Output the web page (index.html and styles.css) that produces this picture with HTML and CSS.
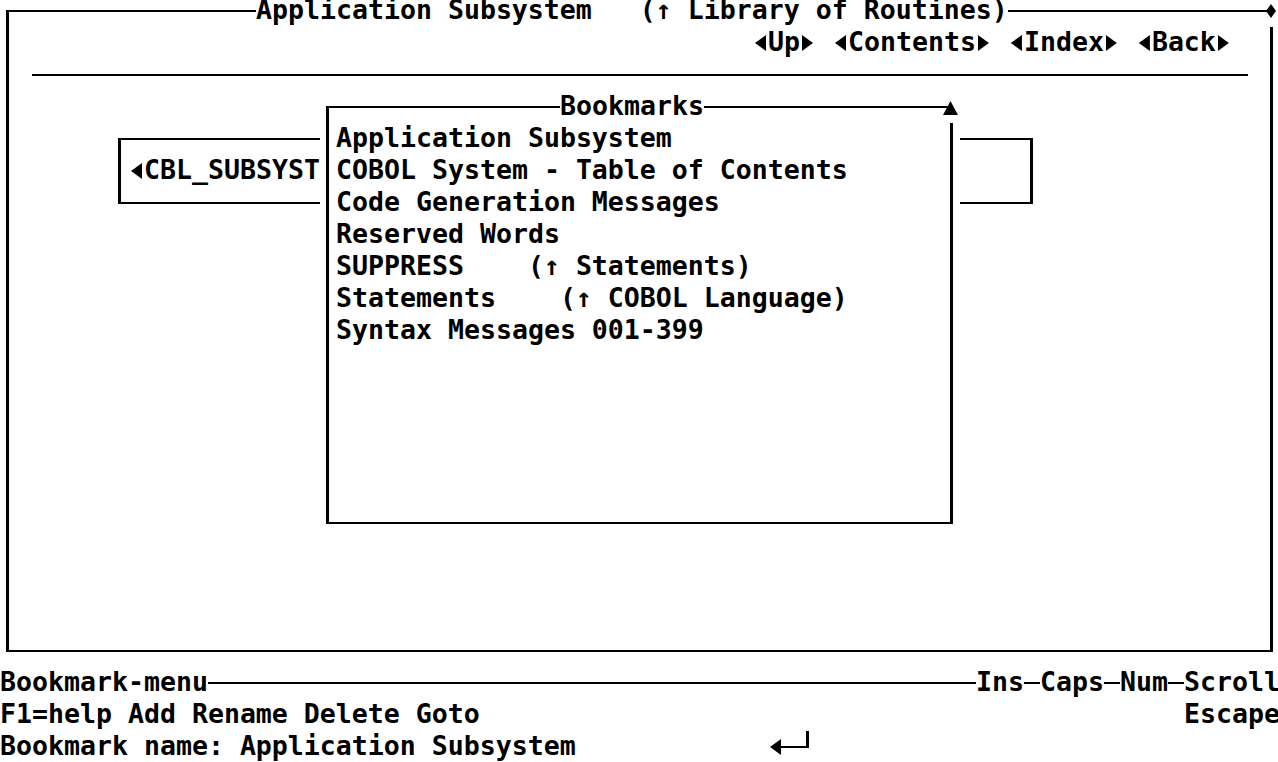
FILE: index.html
```html
<!DOCTYPE html>
<html lang="en">

<head>
    <meta charset="UTF-8">
    <title>Bookmarks</title>
    <link rel="stylesheet" href="styles.css">
</head>

<body>
    <div class="screen">

        <!-- Ventana principal de ayuda -->
        <div class="frame window"></div>
        <div class="window-title txt">Application Subsystem   (↑ Library of Routines)</div>
        <div class="corner-mark"></div>
        <div class="nav-links txt"><span class="arrow-l"></span>Up<span class="arrow-r"></span> <span class="arrow-l"></span>Contents<span class="arrow-r"></span> <span class="arrow-l"></span>Index<span class="arrow-r"></span> <span class="arrow-l"></span>Back<span class="arrow-r"></span></div>
        <div class="separator"></div>

        <!-- Recuadro del hotspot, tapado en parte por el dialogo -->
        <div class="frame hotspot"></div>
        <div class="hotspot-label txt"><span class="arrow-l"></span>CBL_SUBSYST</div>

        <!-- Dialogo de marcadores -->
        <div class="dialog-mask"></div>
        <div class="frame dialog"></div>
        <div class="dialog-title txt">Bookmarks</div>
        <div class="scroll-up"></div>
        <ul class="bookmark-list">
            <li>Application Subsystem</li>
            <li>COBOL System - Table of Contents</li>
            <li>Code Generation Messages</li>
            <li>Reserved Words</li>
            <li>SUPPRESS    (↑ Statements)</li>
            <li>Statements    (↑ COBOL Language)</li>
            <li>Syntax Messages 001-399</li>
        </ul>

        <!-- Lineas de estado -->
        <div class="status-line txt"><span>Bookmark-menu</span><span class="rule"></span><span>Ins<span class="dash"></span>Caps<span class="dash"></span>Num<span class="dash"></span>Scroll</span></div>
        <div class="key-line txt"><span>F1=help Add Rename Delete Goto</span><span>Escape</span></div>
        <div class="prompt-line txt">Bookmark name: Application Subsystem</div>
        <div class="enter-key">
            <svg width="48" height="32" viewBox="0 0 48 32">
                <path d="M2 16 L13 8 V24 Z" />
                <rect x="13" y="15" width="28" height="2" />
                <rect x="38" y="0" width="3" height="17" />
            </svg>
        </div>
    </div>
</body>

</html>
```

FILE: styles.css
```css
/* Pantalla en modo texto: 80 columnas x 24 filas de 16x32 px */
body {
    margin: 0;
    background: #fff;
    color: #000;
    overflow: hidden;
}

.screen {
    display: grid;
    grid-template-columns: repeat(80, 16px);
    grid-template-rows: repeat(24, 32px);
    margin-top: -5px;
    font-family: "DejaVu Sans Mono", monospace;
    font-size: 26.57px;
    font-weight: bold;
    line-height: 30px;
}

.txt {
    white-space: pre;
    background: #fff;
}

/* Marco de caja: lineas en el centro de la celda */
.frame {
    border: 2px solid #000;
    border-left-width: 3px;
    border-right-width: 3px;
    margin: 15px 7px 15px 6px;
}

/* Ventana principal */
.window {
    grid-column: 1 / 81;
    grid-row: 1 / 22;
}

.window-title {
    grid-column: 17 / 64;
    grid-row: 1;
}

.corner-mark {
    grid-column: 80;
    grid-row: 1;
    background:
        linear-gradient(#000, #000) 0 15px / 7px 2px no-repeat,
        #fff;
}

.corner-mark::before {
    content: "";
    display: block;
    width: 10px;
    height: 14px;
    margin: 9px 0 0 2px;
    background: #000;
    clip-path: polygon(50% 0, 100% 50%, 50% 100%, 0 50%);
}

.nav-links {
    grid-column: 48 / 78;
    grid-row: 2;
}

.separator {
    grid-column: 3 / 79;
    grid-row: 3;
    background: linear-gradient(#000, #000) 0 15px / 100% 2px no-repeat;
}

/* Flechas de los enlaces */
.arrow-l,
.arrow-r {
    display: inline-block;
    width: 16px;
    height: 30px;
    vertical-align: top;
}

.arrow-l::before,
.arrow-r::before {
    content: "";
    display: block;
    width: 11px;
    height: 16px;
    margin: 8px 0 0 3px;
    background: #000;
}

.arrow-l::before {
    clip-path: polygon(0 50%, 100% 0, 100% 100%);
}

.arrow-r::before {
    margin-left: 2px;
    clip-path: polygon(0 0, 100% 50%, 0 100%);
}

/* Recuadro del hotspot */
.hotspot {
    grid-column: 8 / 66;
    grid-row: 5 / 8;
}

.hotspot-label {
    grid-column: 9 / 21;
    grid-row: 6;
}

/* Dialogo de marcadores */
.dialog-mask {
    grid-column: 21 / 61;
    grid-row: 4 / 18;
    background: #fff;
}

.dialog {
    grid-column: 21 / 61;
    grid-row: 4 / 18;
}

.dialog-title {
    grid-column: 36 / 45;
    grid-row: 4;
}

.scroll-up {
    grid-column: 60;
    grid-row: 4;
    background:
        linear-gradient(#000, #000) 0 15px / 8px 2px no-repeat,
        #fff;
}

.scroll-up::before {
    content: "";
    display: block;
    width: 15px;
    height: 14px;
    margin: 10px 0 0 -1px;
    background: #000;
    clip-path: polygon(50% 0, 100% 100%, 0 100%);
}

.bookmark-list {
    grid-column: 22 / 59;
    grid-row: 5 / 12;
    list-style: none;
    margin: 0;
    padding: 0;
}

.bookmark-list li {
    height: 32px;
    white-space: pre;
}

/* Lineas de estado inferiores */
.status-line {
    grid-column: 1 / 81;
    grid-row: 22;
    display: flex;
}

.rule {
    flex: 1;
    background: linear-gradient(#000, #000) 0 15px / 100% 2px no-repeat;
}

.dash {
    display: inline-block;
    width: 16px;
    height: 30px;
    vertical-align: top;
    background: linear-gradient(#000, #000) 0 15px / 16px 2px no-repeat;
}

.key-line {
    grid-column: 1 / 81;
    grid-row: 23;
    display: flex;
    justify-content: space-between;
}

.prompt-line {
    grid-column: 1 / 48;
    grid-row: 24;
}

.enter-key {
    grid-column: 49 / 52;
    grid-row: 24;
}

.enter-key svg {
    display: block;
    fill: #000;
}
```
